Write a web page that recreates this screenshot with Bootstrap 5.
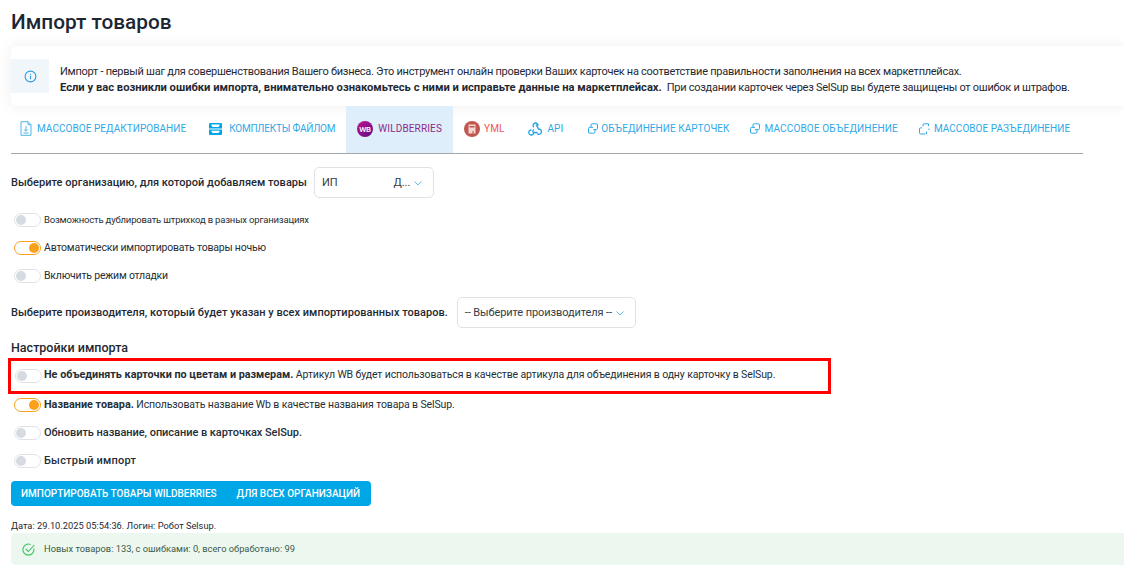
<!DOCTYPE html>
<html lang="ru"><head><meta charset="utf-8"><title>Импорт товаров</title>
<link rel="stylesheet" href="https://cdn.jsdelivr.net/npm/bootstrap@5.3.0/dist/css/bootstrap.min.css">
<style>
html,body{height:577px;overflow:hidden}
body{font-family:Roboto,"Liberation Sans",sans-serif;font-size:12px;color:#212b36;background:#fff}
.pg{padding:0 0 0 11px}
.ttl{font-size:20.800px;font-weight:500;line-height:24px;margin:0;padding-top:10px;color:#1c2733;height:46px}
.info{height:60px;background:#fff;box-shadow:0 0 16px rgba(0,0,0,.07);border-radius:6px 0 0 6px;font-size:11px;letter-spacing:-.27px;line-height:16px;color:#1f2933;white-space:nowrap}
.info b{font-weight:700;font-size:11.200px;letter-spacing:0}
.infoic{width:38px;height:34px;background:#f1f6fb;flex:none;margin-right:11px}
.infotx{padding-top:7px}
.tabsw{width:1072px;height:48px;border-bottom:1px solid #a3a8ad}
.tabx{height:47px;padding:0 11px 2px;font-size:10px;letter-spacing:.05px;color:#2fa8e8;text-transform:uppercase;white-space:nowrap;gap:4px}
.tabx svg{flex:none}
.t1{padding-left:9px;gap:5px}.t2{gap:7px;padding-left:12px;letter-spacing:-.2px}
.t3{background:#deeefa;color:#8e2a8b;gap:5px;letter-spacing:.14px}
.t4{color:#f0564f;letter-spacing:.14px;padding-right:12px}
.t6{padding-left:14px;padding-right:10px;gap:3px}
.t7{padding-left:10px;padding-right:10px;gap:5px;letter-spacing:.15px}
.lbl{font-size:11px;font-weight:500;color:#1f2933;letter-spacing:.03px;padding-top:2px}
.sel{border:1px solid #dfe3e8;border-radius:5px;height:31px;color:#333c45;font-size:11px;letter-spacing:-.1px;padding:2px 11px 0 7px}
.r1{height:31px;margin-top:13px;gap:7px}
.r2{height:31px;margin-top:7px;gap:9px}
.sw{width:27px;height:14px;border:1px solid #dfe3e8;border-radius:7px;background:#fff;flex:none;margin:0 3px;position:relative;display:block}
.sw::after{content:"";position:absolute;left:1px;top:1px;width:10px;height:10px;border-radius:50%;background:#d5dbe0}
.sw.on{border-color:#f9a11b}.sw.on::after{left:auto;right:1px;background:#f9a11b}
.tog{height:28px;color:#252e36;white-space:nowrap;font-size:10.500px;letter-spacing:-.12px}
.tog.sm{font-size:9.500px;letter-spacing:-.18px}
.tog.nr{letter-spacing:-.2px}
.tog b{font-weight:700;font-size:10.800px;letter-spacing:0}
.tog.fw-medium{font-size:11px;letter-spacing:-.05px}
.tog.fw-medium.wd{letter-spacing:.2px}
.hd{font-size:12.500px;font-weight:500;margin:10px 0 0;line-height:20px;color:#1f2933}
.redb{width:823px;height:36px;margin:0 0 -3px -3px;padding:0 0 1px 3px;border:3px solid #f00}
.redb .sw{margin:0 2px 0 1px}
.bt{background:#00a7e6;color:#fff;border:0;border-radius:4px;height:25px;width:360px;font-size:10px;font-weight:500;text-transform:uppercase;padding:0 10px;gap:20px;margin-top:6px;white-space:nowrap}
.dt{font-size:9.300px;color:#1f2933;margin-top:14px;line-height:12px}
.ok{background:#ecf8ef;border-radius:5px 0 0 5px;height:32px;margin-top:1px;padding-left:11px;font-size:9.300px;color:#3e5a4b;gap:9px}
</style></head><body><div class="pg">
<h1 class="ttl">Импорт товаров</h1>
<div class="info d-flex align-items-center">
<div class="infoic d-flex align-items-center justify-content-center"><svg width="13" height="13" viewBox="0 0 14 14" fill="none" stroke="#2c9ce0" stroke-width="1.2"><circle cx="7" cy="7" r="5.8"/><path d="M7 6.3v3.6M7 4v1.1"/></svg></div>
<div class="infotx"><div>Импорт - первый шаг для совершенствования Вашего бизнеса. Это инструмент онлайн проверки Ваших карточек на соответствие правильности заполнения на всех маркетплейсах.</div>
<div><b>Если у вас возникли ошибки импорта, внимательно ознакомьтесь с ними и исправьте данные на маркетплейсах.</b>&nbsp; При создании карточек через SelSup вы будете защищены от ошибок и штрафов.</div></div>
</div>
<div class="tabsw d-flex">
<div class="tabx t1 d-flex align-items-center"><svg width="12" height="15" viewBox="0 0 12 15" fill="none" stroke="#4fb6ea"><path d="M1 .7h7l3 3v10.600H1z"/><path d="M8 .7v3h3"/><path d="M6 5v5M4.200 8.500 6 10.300l1.800-1.800M3.500 12h5"/></svg>Массовое редактирование</div>
<div class="tabx t2 d-flex align-items-center"><svg width="13" height="12" viewBox="0 0 13 12"><path fill="#00a7e6" d="M1 0h11a1 1 0 0 1 1 1v4.500H0V1a1 1 0 0 1 1-1zM0 6.500h13V11a1 1 0 0 1-1 1H1a1 1 0 0 1-1-1z"/><path fill="#fff" d="M2 1.500h9L9.500 4h-6zM2 7.800h9L9.500 10h-6z"/></svg>Комплекты файлом</div>
<div class="tabx t3 d-flex align-items-center"><svg width="16" height="16" viewBox="0 0 16 16"><defs><linearGradient id="wb" x1="0" y1="0" x2="1" y2="1"><stop offset="0" stop-color="#c2118f"/><stop offset="1" stop-color="#5b0f86"/></linearGradient></defs><circle cx="8" cy="8" r="8" fill="url(#wb)"/><text x="8" y="10.800" font-size="8" font-weight="500" letter-spacing="-.3" fill="#fff" text-anchor="middle" font-family="Roboto">WB</text></svg>Wildberries</div>
<div class="tabx t4 d-flex align-items-center"><svg width="16" height="16" viewBox="0 0 16 16"><circle cx="8" cy="8" r="8" fill="#c0574e"/><path d="M4.500 3.500h7v9h-2v-2.500h-1v2.500h-4z" fill="#f3d6d2"/><rect x="5.500" y="5" width="5" height="1.500" fill="#c0574e"/></svg>YML</div>
<div class="tabx t5 d-flex align-items-center"><svg width="16" height="15" viewBox="0 0 16 15" fill="none" stroke="#1b9fe6" stroke-width="1.300"><path d="M5.700 8.500 4.300 11.300M10 5A2.500 2.500 0 1 0 5.800 6.300"/><path d="M8 3.500 10.500 8a2.600 2.600 0 1 1 .5 5.400 2.800 2.800 0 0 1-1.800-.9"/><path d="M9.500 11.500H5.800A2.500 2.500 0 1 1 3.500 9"/></svg>API</div>
<div class="tabx t6 d-flex align-items-center"><svg width="10" height="11" viewBox="0 0 10 11" fill="none" stroke="#2fa8e8"><path d="M3 4.500V2a1.200 1.200 0 0 1 1.200-1.200h4A1.200 1.200 0 0 1 9.500 2v3.500a1.200 1.200 0 0 1-1.200 1.200H5"/><path d="M7 6.500V9a1.200 1.200 0 0 1-1.200 1.200h-4A1.200 1.200 0 0 1 .5 9V5.500a1.200 1.200 0 0 1 1.200-1.200H5"/></svg>Объединение карточек</div>
<div class="tabx t7 d-flex align-items-center"><svg width="10" height="11" viewBox="0 0 10 11" fill="none" stroke="#2fa8e8"><path d="M3 4.500V2a1.200 1.200 0 0 1 1.200-1.200h4A1.200 1.200 0 0 1 9.500 2v3.500a1.200 1.200 0 0 1-1.200 1.200H5"/><path d="M7 6.500V9a1.200 1.200 0 0 1-1.200 1.200h-4A1.200 1.200 0 0 1 .5 9V5.500a1.200 1.200 0 0 1 1.200-1.200H5"/></svg>Массовое объединение</div>
<div class="tabx t8 d-flex align-items-center"><svg width="11" height="12" viewBox="0 0 11 12" fill="none" stroke="#2fa8e8"><path d="M4 3.500V2a1.200 1.200 0 0 1 1.200-1.200h4.300V3M10 5.500v1.500"/><path d="M6.500 11H1.700A1.200 1.200 0 0 1 .5 9.800V6a1.200 1.200 0 0 1 1.200-1.200H3M7.500 8.500V11"/></svg>Массовое разъединение</div>
</div>
<div class="r1 d-flex align-items-center"><span class="lbl">Выберите организацию, для которой добавляем товары</span>
<div class="sel d-flex align-items-center" style="width:120px"><span style="width:74px">ИП</span><span>Д...</span><svg class="ms-1" width="8" height="5" viewBox="0 0 8 5" fill="none" stroke="#5bb8ea"><path d="m.5.500 3.500 3.500L7.500.500"/></svg></div></div>
<div class="mt-1 pt-1">
<div class="tog sm d-flex align-items-center"><i class="sw"></i>Возможность дублировать штрихкод в разных организациях</div>
<div class="tog nr d-flex align-items-center"><i class="sw on"></i>Автоматически импортировать товары ночью</div>
<div class="tog nr d-flex align-items-center"><i class="sw"></i>Включить режим отладки</div></div>
<div class="r2 d-flex align-items-center"><span class="lbl">Выберите производителя, который будет указан у всех импортированных товаров.</span>
<div class="sel d-flex align-items-center"><span>-- Выберите производителя --</span><svg class="ms-1" width="8" height="5" viewBox="0 0 8 5" fill="none" stroke="#5bb8ea"><path d="m.5.500 3.500 3.500L7.500.500"/></svg></div></div>
<h2 class="hd">Настройки импорта</h2>
<div class="redb tog d-flex align-items-center"><i class="sw"></i><span><b>Не объединять карточки по цветам и размерам.</b> Артикул WB будет использоваться в качестве артикула для объединения в одну карточку в SelSup.</span></div>
<div class="tog d-flex align-items-center"><i class="sw on"></i><span><b>Название товара.</b> Использовать название Wb в качестве названия товара в SelSup.</span></div>
<div class="tog d-flex align-items-center fw-medium"><i class="sw"></i>Обновить название, описание в карточках SelSup.</div>
<div class="tog d-flex align-items-center fw-medium wd"><i class="sw"></i>Быстрый импорт</div>
<button class="bt d-flex align-items-center"><span>Импортировать товары Wildberries</span><span>для всех организаций</span></button>
<div class="dt">Дата: 29.10.2025 05:54:36. Логин: Робот Selsup.</div>
<div class="ok d-flex align-items-center"><svg width="13" height="13" viewBox="0 0 13 13" fill="none" stroke="#3fc463" stroke-width="1.100"><path d="M11.800 5.500A5.500 5.500 0 1 1 8.500 1.500"/><path d="m3.800 6 2.500 2.500 6-6.500"/></svg>Новых товаров: 133, с ошибками: 0, всего обработано: 99</div>
</div>
</body></html>
